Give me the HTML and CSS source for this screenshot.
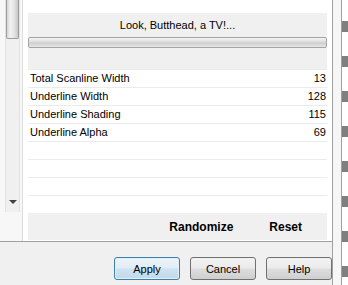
FILE: index.html
```html
<!DOCTYPE html>
<html lang="en">

<head>
    <meta charset="UTF-8">
    <title>Scanline Settings</title>
    <link rel="stylesheet" href="styles.css">
</head>

<body>
    <div class="window">
        <div class="main">
            <div class="top">
                <div class="side">
                    <div class="scrollbar">
                        <div class="thumb"></div>
                        <div class="arrow-down"></div>
                    </div>
                </div>
                <div class="panel">
                    <div class="status">
                        <div class="caption">Look, Butthead, a TV!...</div>
                        <div class="progress"></div>
                    </div>
                    <div class="list">
                        <div class="row"><span>Total Scanline Width</span><span>13</span></div>
                        <div class="row"><span>Underline Width</span><span>128</span></div>
                        <div class="row"><span>Underline Shading</span><span>115</span></div>
                        <div class="row"><span>Underline Alpha</span><span>69</span></div>
                        <div class="row"></div>
                        <div class="row"></div>
                        <div class="row"></div>
                        <div class="row"></div>
                    </div>
                    <div class="actions">
                        <button class="link-btn">Randomize</button>
                        <button class="link-btn">Reset</button>
                    </div>
                </div>
            </div>
            <div class="footer">
                <button class="btn btn-default">Apply</button>
                <button class="btn">Cancel</button>
                <button class="btn">Help</button>
            </div>
        </div>
        <div class="edge">
            <div class="rail"></div>
            <div class="stripes"></div>
        </div>
    </div>
</body>

</html>
```

FILE: styles.css
```css
html,
body {
    margin: 0;
    padding: 0;
}

body {
    font-family: "Liberation Sans", Arial, sans-serif;
    font-size: 11px;
    color: #000;
    background-color: #f0f0f0;
    width: 348px;
    height: 285px;
    overflow: hidden;
}

.window {
    display: flex;
    height: 285px;
}

.main {
    width: 332px;
    flex: none;
    display: flex;
    flex-direction: column;
}

.top {
    display: flex;
    height: 241px;
    border-bottom: 1px solid #a0a0a0;
    background-color: #fff;
}

.side {
    width: 22px;
    border-right: 1px solid #dcdcdc;
    background-color: #f7f7f7;
}

.scrollbar {
    position: relative;
    margin-left: 5px;
    width: 13px;
    height: 212px;
    background-color: #f0f0f0;
    border-left: 1px solid #e2e2e2;
    border-right: 1px solid #e2e2e2;
}

.thumb {
    height: 38px;
    border: 1px solid #9c9c9c;
    border-top: none;
    border-radius: 0 0 2px 2px;
    background: linear-gradient(to right, #d6d6d6, #f2f2f2 30%, #e4e4e4 65%, #c8c8c8);
}

.arrow-down {
    position: absolute;
    left: 3px;
    top: 200px;
    width: 0;
    height: 0;
    border-left: 4px solid transparent;
    border-right: 4px solid transparent;
    border-top: 4px solid #404040;
}

.panel {
    flex: 1;
    padding: 13px 5px 0 5px;
}

.status {
    background-color: #f0f0f0;
    height: 56px;
}

.caption {
    height: 24px;
    line-height: 25px;
    text-align: center;
}

.progress {
    height: 9px;
    border: 1px solid #a4a4a4;
    border-radius: 2px;
    background: linear-gradient(to bottom, #f4f4f4, #dcdcdc 45%, #cdcdcd 55%, #e6e6e6);
}

.list {
    background-color: #fff;
}

.row {
    display: flex;
    justify-content: space-between;
    height: 18px;
    box-sizing: border-box;
    border-top: 1px solid #ebebeb;
    padding: 0 1px 0 2px;
    line-height: 17px;
}

.actions {
    display: flex;
    justify-content: flex-end;
    height: 27px;
    padding-right: 7px;
    background-color: #f0f0f0;
}

.link-btn {
    border: none;
    background: none;
    padding: 0 18px;
    font-family: "Liberation Sans", Arial, sans-serif;
    font-size: 12px;
    font-weight: bold;
    color: #000;
}

.footer {
    display: flex;
    justify-content: flex-end;
    gap: 10px;
    padding-top: 15px;
}

.btn {
    width: 66px;
    height: 23px;
    padding: 0;
    border: 1px solid #707070;
    border-radius: 3px;
    background: linear-gradient(to bottom, #f2f2f2, #ebebeb 48%, #dddddd 52%, #cfcfcf);
    font-family: "Liberation Sans", Arial, sans-serif;
    font-size: 11px;
    color: #000;
}

.btn-default {
    border-color: #3c7fb1;
    background: linear-gradient(to bottom, #eef5fa, #e0ecf5 48%, #cfe2f0 52%, #c2d9ea);
    box-shadow: inset 0 0 0 1px #e4f0f8;
}

.edge {
    flex: 1;
    display: flex;
}

.rail {
    width: 8px;
    border-left: 1px solid #a0a0a0;
    border-right: 1px solid #a0a0a0;
    background-color: #f6f6f6;
}

.stripes {
    flex: 1;
    background: repeating-linear-gradient(to bottom, #fff 0 21px, #7f7f7f 21px 32px, #fff 32px 35px);
}
```
